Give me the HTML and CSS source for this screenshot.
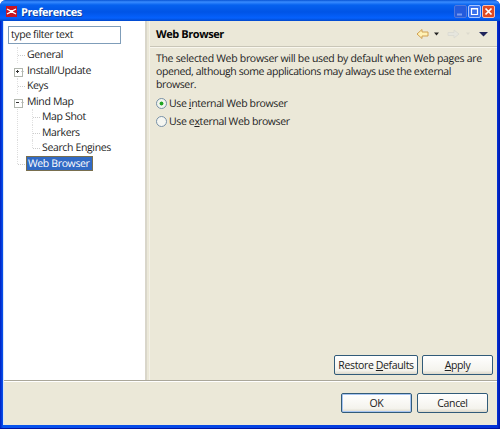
FILE: index.html
```html
<!DOCTYPE html>
<html lang="en">
<head>
<meta charset="utf-8">
<title>Preferences</title>
<link rel="stylesheet" href="styles.css">
</head>
<body>
<div class="window">
  <header class="titlebar">
    <svg class="logo" width="11" height="11" viewBox="0 0 11 11"><rect width="11" height="11" fill="#c91622"/><path d="M1 3L4 4.6H7L10 3M1 8L4 6.4H7L10 8" fill="none" stroke="#fff" stroke-width="1.4"/><path d="M4 5.5H7" stroke="#fff" stroke-width="1.5"/></svg>
    <h1>Preferences</h1>
    <div class="controls">
      <svg width="13" height="13" viewBox="0 0 13 13"><rect x=".5" y=".5" width="12" height="12" rx="1.5" fill="#245bdd" stroke="#5078dc"/><path d="M3 9.5H8" stroke="#7b9cf0" stroke-width="2"/></svg>
      <svg width="13" height="13" viewBox="0 0 13 13"><rect x=".5" y=".5" width="12" height="12" rx="1.5" fill="#3971ed" stroke="#a9c5ff"/><path d="M3.5 3.5H9.5V9.5H3.5ZM3 4H10" fill="none" stroke="#fff" stroke-width="1.2"/></svg>
      <svg width="13" height="13" viewBox="0 0 13 13"><rect x=".5" y=".5" width="12" height="12" rx="1.5" fill="#df4a23" stroke="#f7c2b2"/><path d="M3.5 3.5L9.5 9.5M9.5 3.5L3.5 9.5" stroke="#fff" stroke-width="1.7"/></svg>
    </div>
  </header>
  <div class="content">
    <main class="panes">
      <aside class="sidebar">
        <div class="filter"><span>type filter text</span></div>
        <ul class="tree">
          <li><i class="branch"></i><span>General</span></li>
          <li><i class="branch box plus"></i><span>Install/Update</span></li>
          <li><i class="branch"></i><span>Keys</span></li>
          <li><i class="branch box"></i><span>Mind Map</span></li>
          <li><i class="trunk"></i><i class="branch"></i><span>Map Shot</span></li>
          <li><i class="trunk"></i><i class="branch"></i><span>Markers</span></li>
          <li><i class="trunk"></i><i class="branch last"></i><span>Search Engines</span></li>
          <li><i class="branch last"></i><span class="selected">Web Browser</span></li>
        </ul>
      </aside>
      <div class="sash"></div>
      <section class="page">
        <div class="page-head">
          <h2>Web Browser</h2>
          <svg class="nav" width="76" height="14" viewBox="0 0 76 14">
            <path d="M1 7L6 2.5V5H12V9H6V11.5Z" fill="#fff2b6" stroke="#d0a052"/>
            <path d="M18 5.5H23L20.5 8.5Z" fill="#222"/>
            <path d="M43 7L38 3V5.5H32V8.5H38V11Z" fill="#e6e6de" stroke="#dcdcd3"/>
            <path d="M50 5.5H54L52 8Z" fill="#dddbce"/>
            <path d="M63 5H72L67.5 9.5Z" fill="#20265c"/>
          </svg>
        </div>
        <div class="page-body">
          <p><span class="line1">The selected Web browser will be used by default when Web pages are</span><br><span class="line2">opened, although some applications may always use the external</span><br><span>browser.</span></p>
          <label><i class="radio checked"></i><span>Use <u>i</u>nternal Web browser</span></label>
          <label><i class="radio"></i><span>Use e<u>x</u>ternal Web browser</span></label>
          <div class="actions">
            <button class="restore">Restore <u>D</u>efaults</button>
            <button class="apply"><u>A</u>pply</button>
          </div>
        </div>
      </section>
    </main>
    <footer>
      <button class="ok">OK</button>
      <button class="cancel">Cancel</button>
    </footer>
  </div>
</div>
</body>
</html>
```

FILE: styles.css
```css
* { box-sizing: border-box; }
body { margin: 0; background: #fff; font: 10.5px/13px "Open Sans", "Noto Sans", sans-serif; letter-spacing: -.36px; text-rendering: geometricPrecision; color: #222; }
h1, h2, p, ul { margin: 0; padding: 0; }
h1, h2 { font-size: 11px; letter-spacing: -.42px; }
i { display: block; flex: none; }
span, h1, h2, button { white-space: nowrap; }
.window { width: 500px; height: 429px; display: flex; flex-direction: column; padding: 0 3px 3px; border-radius: 6px 6px 0 0; background: linear-gradient(90deg, #001fc4 0, #0755ef 3px, #0233d8 497px, #0016aa 500px); border-bottom: 1px solid #0013a0; overflow: hidden; }
.titlebar { height: 21px; flex: none; display: flex; align-items: center; margin: 0 -3px; padding: 3px 5px 0 6px; background: linear-gradient(#0753d4 0, #398cff 2px, #0662ef 5px, #0054e6 12px, #0561fd 18px, #0148cb 21px); }
.logo { margin-top: -1px; }
.titlebar h1 { margin-left: 4px; color: #fff; text-shadow: 1px 1px #123f9b; }
.controls { display: flex; gap: 1px; margin: -2px 0 0 auto; }
.content { flex: 1; display: flex; flex-direction: column; background: #ebe8d8; border-left: 1px solid #d8e5f8; }
.panes { height: 359px; display: flex; }
.sidebar { width: 141px; flex: none; background: #fff; padding: 5px 4px; }
.filter { width: 113px; height: 18px; border: 1px solid #7f9db9; padding: 1px 2px; line-height: 15px; letter-spacing: -.4px; }
.tree { list-style: none; padding: 3px 0 0 6px; }
.tree li { height: 15.5px; display: flex; align-items: center; }
.tree span { line-height: 15px; padding-top: 2px; }
.branch { width: 11px; height: 15.5px; position: relative; margin-left: 2px; }
.branch::before { content: ""; position: absolute; left: 1px; top: 0; height: 100%; border-left: 1px dotted #e0e0e0; }
.branch::after { content: ""; position: absolute; left: 2px; top: 8px; width: 7px; border-top: 1px dotted #ccc; }
.branch.last::before { height: 8px; }
.branch.box { margin-left: 0; width: 13px; background: linear-gradient(#333, #333) 2px 8px / 3px 1px no-repeat; }
.branch.box::before { left: 0; top: 5px; width: 7px; height: 7px; border: 1px solid #b1b6ae; }
.branch.box::after { left: 7px; width: 3px; }
.branch.plus { background: linear-gradient(#333, #333) 2px 8px / 3px 1px no-repeat, linear-gradient(#333, #333) 3px 7px / 1px 3px no-repeat; }
.trunk { width: 15px; height: 15.5px; background: repeating-linear-gradient(#ddd 0 1px, transparent 1px 2px) 3px 0 / 1px 100% no-repeat; }
.tree .selected { width: 67px; height: 15px; margin-left: -1px; padding: 0 0 0 1px; line-height: 14px; border: 1px solid #796f4e; background: #316ac5; color: #fff; }
.sash { width: 5px; flex: none; background: linear-gradient(90deg, #d9d6ca 0 2px, #ebe8d8 2px 4px, #f4f2e9 4px); }
.page { flex: 1; min-width: 0; display: flex; flex-direction: column; }
.page-head { height: 26px; display: flex; align-items: center; justify-content: space-between; padding: 1px 5px 0 6px; border-bottom: 1px solid #c9c6b8; box-shadow: 0 1px #f9f7ee; }
.page-head h2 { color: #050505; padding-top: 1px; }
.page-body { flex: 1; display: flex; flex-direction: column; padding: 6px 1px 5px 6px; }
.line1 { letter-spacing: -.3px; }
.line2 { letter-spacing: -.38px; }
label { display: flex; align-items: center; height: 18px; gap: 2px; }
label span { padding-top: 2px; }
p + label { margin-top: 2px; }
u { text-decoration: underline; text-underline-offset: 1px; text-decoration-thickness: 1px; }
.radio { width: 11px; height: 11px; border: 1px solid #7891a7; border-radius: 50%; background: #f5f6f1; }
.radio.checked { background: radial-gradient(circle, #20a522 0 1.6px, #f2f5ed 2.3px); }
.actions { display: flex; gap: 4px; justify-content: flex-end; margin: auto 3px 0 0; }
button { font: inherit; letter-spacing: -.36px; line-height: 15px; color: #202020; height: 20px; border: 1px solid #315b79; border-radius: 2px; background: linear-gradient(#fff, #f4f3ed 80%, #dcd8ca); padding: 1px 0 0; }
.restore { width: 84px; }
.apply { width: 71px; }
footer { flex: 1; display: flex; justify-content: flex-end; gap: 5px; padding: 12px 9px 0 0; border-top: 1px solid #aaa79a; box-shadow: inset 0 1px #fff; }
.ok, .cancel { width: 71px; }
.ok { box-shadow: inset 0 0 0 1px #a6c4f1; }
```
